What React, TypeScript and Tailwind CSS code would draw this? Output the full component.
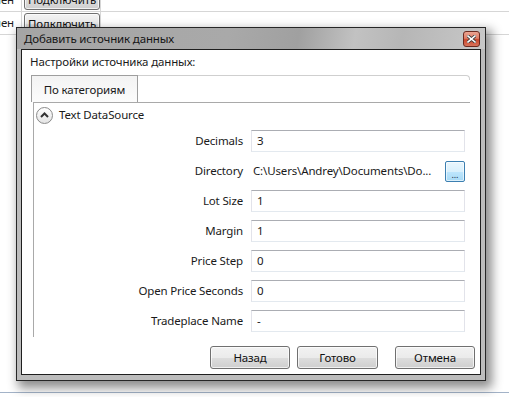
import React from "react";

const rows: { label: string; value: string; kind?: "dir" }[] = [
  { label: "Decimals", value: "3" },
  { label: "Directory", value: "C:\\Users\\Andrey\\Documents\\Do...", kind: "dir" },
  { label: "Lot Size", value: "1" },
  { label: "Margin", value: "1" },
  { label: "Price Step", value: "0" },
  { label: "Open Price Seconds", value: "0" },
  { label: "Tradeplace Name", value: "-" },
];

function WinButton({ label, w }: { label: string; w: string }) {
  return (
    <div
      className={`${w} h-[23px] rounded-[3px] border border-[#707070] bg-[linear-gradient(#f2f2f2_0%,#ebebeb_50%,#dddddd_51%,#cfcfcf_100%)] shadow-[inset_0_0_0_1px_rgba(255,255,255,0.7)] flex items-center justify-center text-[#111]`}
    >
      {label}
    </div>
  );
}

function GridButton() {
  return (
    <div className="ml-[2px] w-[77px] h-[21px] rounded-[3px] border border-[#707070] bg-[linear-gradient(#f2f2f2_0%,#ebebeb_50%,#dddddd_51%,#cfcfcf_100%)] shadow-[inset_0_0_0_1px_rgba(255,255,255,0.7)] flex items-center justify-center text-[#111] leading-none">
      Подключить
    </div>
  );
}

export default function App() {
  return (
    <div className="relative w-[509px] h-[397px] overflow-hidden bg-white font-['Segoe_UI','Noto_Sans',sans-serif] text-[11.5px] tracking-[-0.15px] text-[#1a1a1a]">
      {/* background page */}
      <div className="flex flex-col h-full">
        <div className="mt-[-12px] h-[24px] flex border-b border-[#d6d6d6] shrink-0">
          <div className="w-[22px] border-r border-[#d6d6d6] overflow-hidden flex justify-end items-center pr-[7px] whitespace-nowrap">
            Подключен
          </div>
          <div className="w-[79px] border-r border-[#d6d6d6] flex items-end pb-[1px]">
            <GridButton />
          </div>
        </div>
        <div className="h-[23px] flex border-b border-[#d6d6d6] shrink-0">
          <div className="w-[22px] border-r border-[#d6d6d6] overflow-hidden flex justify-end items-center pr-[7px] whitespace-nowrap">
            Подключен
          </div>
          <div className="w-[79px] border-r border-[#d6d6d6] flex items-start pt-[1px]">
            <GridButton />
          </div>
        </div>
        <div className="flex-1" />
        <div className="h-[5px] border-t border-[#a3b3c8] shrink-0" />
      </div>

      {/* dialog window */}
      <div className="absolute left-[16px] top-[27px] w-[470px] h-[354px] border border-[#262626] bg-[#bcbcbc] shadow-[4px_5px_10px_2px_rgba(0,0,0,0.45)] flex flex-col">
        <div className="h-[21px] shrink-0 flex items-center justify-between pl-[7px] pr-[5px] bg-[linear-gradient(100deg,#a5a5a5_0%,#a9a9a9_45%,#a0a0a0_60%,#c2c2c2_72%,#b6b6b6_82%,#c8c8c8_100%)]">
          <span className="text-[#151515]">Добавить источник данных</span>
          <div className="w-[17px] h-[16px] rounded-[3px] border border-[#6b2a20] bg-[linear-gradient(#eba592_0%,#dd7c65_45%,#c9472c_55%,#d8735b_100%)] flex items-center justify-center">
            <svg width="9" height="8" viewBox="0 0 9 8">
              <path d="M1 1 L8 7 M8 1 L1 7" stroke="#3b3b3b" strokeWidth="3.2" strokeLinecap="square" />
              <path d="M1 1 L8 7 M8 1 L1 7" stroke="#ffffff" strokeWidth="1.6" strokeLinecap="square" />
            </svg>
          </div>
        </div>
        <div className="flex-1 mx-[4px] mb-[5px] border border-[#1f1f1f] bg-white flex flex-col">
          <div className="pl-[8px] pt-[4px] h-[20px] leading-[16px]">Настройки источника данных:</div>
          {/* tab strip */}
          <div className="mt-[5px] ml-[9px] mr-[10px] h-[27px] flex shrink-0">
            <div className="w-[107px] h-[27px] border-l border-t border-r border-[#9e9e9e] bg-[linear-gradient(#f3f3f3,#fcfcfc)] flex items-center justify-center pt-[1px]">
              По категориям
            </div>
            <div className="flex-1 h-[5px] border-t border-r border-[#cfcfcf] rounded-tr-[4px]" />
          </div>
          {/* property grid */}
          <div className="ml-[11px] mr-[10px] h-[235px] border-t border-l border-[#a9a9a9] overflow-hidden flex flex-col">
            <div className="h-[24px] flex items-center pl-[2px] gap-[6px]">
              <div className="w-[17px] h-[17px] rounded-full border border-[#8a8a8a] bg-[linear-gradient(#ffffff,#e4e4e4)] flex items-center justify-center">
                <svg width="9" height="6" viewBox="0 0 9 6">
                  <path d="M1 5 L4.5 1.5 L8 5" fill="none" stroke="#333" strokeWidth="2" />
                </svg>
              </div>
              <span>Text DataSource</span>
            </div>
            <div className="mt-[3px] flex flex-col gap-[8px]">
              {rows.map((r) => (
                <div key={r.label} className="h-[22px] flex items-center">
                  <div className="w-[209px] text-right whitespace-nowrap">{r.label}</div>
                  {r.kind === "dir" ? (
                    <div className="ml-[8px] w-[214px] h-[22px] flex items-center">
                      <span className="ml-[2px] flex-1 whitespace-nowrap overflow-hidden">{r.value}</span>
                      <div className="w-[20px] h-[21px] rounded-[2px] border border-[#3c7fb1] bg-[linear-gradient(#eaf6fd_0%,#d9f0fc_50%,#bee6fd_51%,#a7d9f5_100%)] shadow-[inset_0_0_0_1px_rgba(255,255,255,0.6)] flex items-end justify-center pb-[2px]">
                        <span className="text-[9px] leading-[8px] text-[#1a2a4a]">...</span>
                      </div>
                    </div>
                  ) : (
                    <div className="ml-[8px] w-[214px] h-[22px] border border-[#e2e3ea] border-t-[#abadb3] border-b-[#e3e9ef] flex items-center pl-[5px]">
                      {r.value}
                    </div>
                  )}
                </div>
              ))}
            </div>
          </div>
          {/* buttons */}
          <div className="mt-[9px] flex justify-end pr-[5px]">
            <WinButton label="Назад" w="w-[80px]" />
            <div className="w-[7px]" />
            <WinButton label="Готово" w="w-[81px]" />
            <div className="w-[17px]" />
            <WinButton label="Отмена" w="w-[80px]" />
          </div>
        </div>
      </div>
    </div>
  );
}
